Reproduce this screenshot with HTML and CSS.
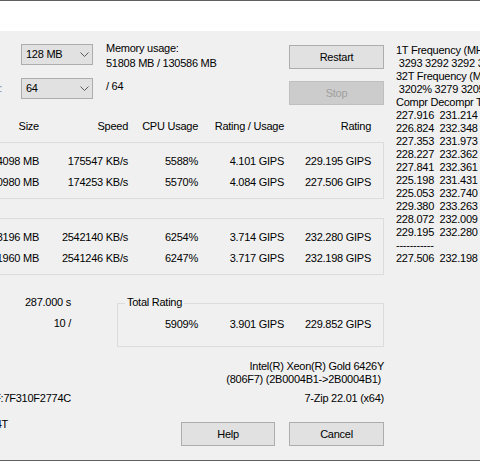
FILE: index.html
```html
<!DOCTYPE html>
<html>
<head>
<meta charset="utf-8">
<title>Benchmark</title>
<link rel="stylesheet" href="styles.css">
</head>
<body>
<div class="window">
  <div class="titlebar"></div>
  <div class="client">
    <div class="main">
      <div class="top">
        <div class="params">
          <div class="plabel">Dictionary size:&nbsp;&nbsp;&nbsp;&nbsp;&nbsp;&nbsp;&nbsp;&nbsp;&nbsp;</div>
          <div class="combo"><span>128 MB</span><svg class="chev" width="9" height="5" viewBox="0 0 9 5"><path d="M0.5 0.5 L4.5 4.5 L8.5 0.5"/></svg></div>
          <div class="mem"><div>Memory usage:</div><div>51808 MB / 130586 MB</div></div>
          <div class="plabel">Number of CPU threads:</div>
          <div class="combo"><span>64</span><svg class="chev" width="9" height="5" viewBox="0 0 9 5"><path d="M0.5 0.5 L4.5 4.5 L8.5 0.5"/></svg></div>
          <div class="threads">/ 64</div>
        </div>
        <div class="btncol">
          <button class="btn">Restart</button>
          <button class="btn disabled">Stop</button>
        </div>
      </div>

      <div class="cols header">
        <div class="cell">Size</div>
        <div class="cell">Speed</div>
        <div class="cell">CPU Usage</div>
        <div class="cell">Rating / Usage</div>
        <div class="cell">Rating</div>
      </div>

      <div class="group first">
        <div class="cols row">
          <div class="cell">24098 MB</div>
          <div class="cell">175547 KB/s</div>
          <div class="cell">5588%</div>
          <div class="cell">4.101 GIPS</div>
          <div class="cell">229.195 GIPS</div>
        </div>
        <div class="cols row">
          <div class="cell">20980 MB</div>
          <div class="cell">174253 KB/s</div>
          <div class="cell">5570%</div>
          <div class="cell">4.084 GIPS</div>
          <div class="cell">227.506 GIPS</div>
        </div>
      </div>

      <div class="group second">
        <div class="cols row">
          <div class="cell">383196 MB</div>
          <div class="cell">2542140 KB/s</div>
          <div class="cell">6254%</div>
          <div class="cell">3.714 GIPS</div>
          <div class="cell">232.280 GIPS</div>
        </div>
        <div class="cols row">
          <div class="cell">381960 MB</div>
          <div class="cell">2541246 KB/s</div>
          <div class="cell">6247%</div>
          <div class="cell">3.717 GIPS</div>
          <div class="cell">232.198 GIPS</div>
        </div>
      </div>

      <div class="summary">
        <div class="stats">
          <div class="cell">287.000 s</div>
          <div class="cell">10 /</div>
        </div>
        <div class="total">
          <span class="legend">Total Rating</span>
          <div class="trow">
            <div class="cell"></div>
            <div class="cell">5909%</div>
            <div class="cell">3.901 GIPS</div>
            <div class="cell">229.852 GIPS</div>
          </div>
        </div>
      </div>

      <div class="cpu">
        <div>Intel(R) Xeon(R) Gold 6426Y</div>
        <div class="cpu2">(806F7) (2B0004B1-&gt;2B0004B1)</div>
      </div>

      <div class="footer">
        <div class="sys">
          <div class="sysline">Windows 10.0 19045 : 0F:7F310F2774C</div>
          <div class="sysline"></div>
          <div class="sysline short">x64 64T</div>
        </div>
        <div class="fright">
          <div class="ver">7-Zip 22.01 (x64)</div>
          <div class="btnrow">
            <button class="btn help">Help</button>
            <button class="btn">Cancel</button>
          </div>
        </div>
      </div>
    </div>

    <div class="side"><pre class="freq">1T Frequency (MHz):
 3293 3292 3292 3293 3292 3293
32T Frequency (MHz):
 3202% 3279 3205% 3280
Compr Decompr Total   CPU
227.916  231.214  229.565  5903%
226.824  232.348  229.586  5896%
227.353  231.973  229.663  5911%
228.227  232.362  230.294  5920%
227.841  232.361  230.101  5914%
225.198  231.431  228.315  5897%
225.053  232.740  228.896  5905%
229.380  233.263  231.321  5921%
228.072  232.009  230.040  5910%
229.195  232.280  230.737  5921%
-----------
227.506  232.198  229.852  5909%</pre></div>
  </div>
</div>
</body>
</html>
```

FILE: styles.css
```css
html, body {
  margin: 0;
  padding: 0;
  overflow: hidden;
  background: #f0f0f0;
}

body {
  font-family: "Liberation Sans", Arial, sans-serif;
  font-size: 11px;
  letter-spacing: -0.25px;
  color: #000;
}

.window {
  width: 480px;
  height: 461px;
  box-sizing: border-box;
  border-top: 1px solid #5f5f5f;
  border-bottom: 1px solid #5f5f5f;
  display: flex;
  flex-direction: column;
  overflow: hidden;
}

.titlebar {
  height: 30px;
  background: #ffffff;
  flex: none;
}

.client {
  flex: 1;
  display: flex;
  background: #f0f0f0;
}

.main {
  width: 384px;
  flex: none;
  padding-top: 13px;
}

/* top controls */
.top {
  display: flex;
  justify-content: space-between;
  align-items: flex-start;
}

.params {
  display: grid;
  grid-template-columns: 21px 72px auto;
  grid-template-rows: 21px 21px;
  row-gap: 13px;
}

.plabel {
  width: 2px;
  display: flex;
  justify-content: flex-end;
  align-items: center;
  white-space: nowrap;
  line-height: 13px;
  color: #5b7fa8;
}

.combo {
  width: 72px;
  height: 21px;
  box-sizing: border-box;
  background: #e1e1e1;
  border: 1px solid #adadad;
  display: flex;
  align-items: center;
  padding: 0 3px 0 4px;
  line-height: 19px;
  white-space: nowrap;
}

.combo span {
  flex: 1;
}

.chev {
  display: block;
  flex: none;
}

.chev path {
  fill: none;
  stroke: #5a5a5a;
  stroke-width: 1;
}

.mem {
  margin-left: 13px;
  margin-top: -3px;
  line-height: 15px;
  white-space: nowrap;
  align-self: start;
}

.threads {
  margin-left: 13px;
  margin-top: 2px;
  line-height: 13px;
  align-self: start;
}

.btncol {
  margin-top: 1px;
  display: flex;
  flex-direction: column;
  gap: 12px;
  width: 95px;
}

.btn {
  font-family: inherit;
  font-size: 11px;
  letter-spacing: inherit;
  color: #000;
  background: #e1e1e1;
  border: 1px solid #adadad;
  height: 24px;
  width: 95px;
  padding: 0;
  margin: 0;
  box-sizing: border-box;
  line-height: 22px;
  text-align: center;
}

.btn.disabled {
  background: #cccccc;
  border-color: #bfbfbf;
  color: #a0a0a0;
}

.btn.help {
  width: 94px;
}

/* columns */
.cols {
  display: grid;
  grid-template-columns: 39px 89px 70px 86px 87px;
}

.cell {
  display: flex;
  justify-content: flex-end;
  white-space: nowrap;
}

.header {
  margin-top: 15px;
  line-height: 13px;
}

.group {
  width: 384px;
  box-sizing: border-box;
  border: 1px solid #dcdcdc;
  border-left: none;
  padding: 8px 0 5px 0;
}

.group.first {
  margin-top: 9px;
}

.group.second {
  margin-top: 19px;
}

.row {
  height: 21px;
  line-height: 21px;
}

/* summary */
.summary {
  margin-top: 17px;
  display: flex;
  align-items: flex-start;
}

.stats {
  width: 71px;
  flex: none;
  line-height: 21px;
}

.total {
  position: relative;
  margin-left: 46px;
  margin-top: 11px;
  width: 267px;
  box-sizing: border-box;
  border: 1px solid #dcdcdc;
  padding: 10px 0 11px 0;
}

.legend {
  position: absolute;
  top: -8px;
  left: 7px;
  padding: 0 2px;
  background: #f0f0f0;
  line-height: 13px;
  white-space: nowrap;
}

.trow {
  display: grid;
  grid-template-columns: 10px 70px 86px 87px;
  height: 21px;
  line-height: 21px;
}

/* cpu info */
.cpu {
  margin-top: 13px;
  text-align: right;
  line-height: 13px;
  white-space: nowrap;
}

.cpu2 {
  padding-right: 3px;
}

.footer {
  margin-top: 6px;
  display: flex;
  align-items: flex-start;
}

.sys {
  width: 71px;
  flex: none;
  line-height: 13px;
}

.sysline {
  height: 13px;
  display: flex;
  justify-content: flex-end;
  white-space: nowrap;
}

.sysline.short {
  width: 8px;
}

.fright {
  flex: 1;
  display: flex;
  flex-direction: column;
}

.ver {
  text-align: right;
  line-height: 13px;
  white-space: nowrap;
}

.btnrow {
  margin-top: 17px;
  display: flex;
  justify-content: flex-end;
  gap: 14px;
}

/* side text */
.side {
  margin-left: 12px;
  padding-top: 13px;
  flex: none;
}

.freq {
  margin: 0;
  font-family: inherit;
  font-size: 11px;
  line-height: 13px;
  white-space: pre;
}
```
